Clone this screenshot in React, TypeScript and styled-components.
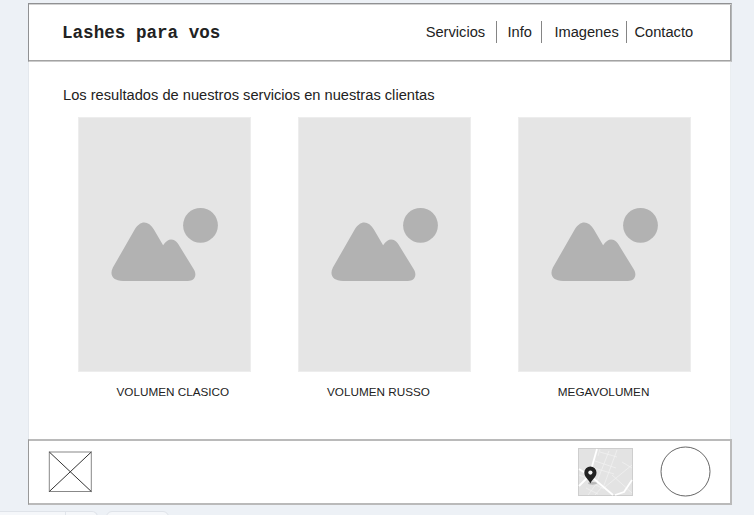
import React from "react";
import styled, { createGlobalStyle } from "styled-components";

const GlobalStyle = createGlobalStyle`
  *, *::before, *::after { box-sizing: border-box; }
  body { margin: 0; background: #edf1f6; overflow: hidden; }
`;

const Canvas = styled.div`
  display: flex;
  flex-direction: column;
  width: 754px;
  height: 515px;
  padding-top: 3px;
  overflow: hidden;
  background: #edf1f6;
  color: #222;
  font-family: "Liberation Sans", Arial, sans-serif;
`;

const Page = styled.div`
  display: flex;
  flex-direction: column;
  width: 704px;
  margin-left: 28px;
`;

const Header = styled.header`
  display: flex;
  align-items: flex-start;
  height: 59px;
  padding: 0 0 0 33px;
  background: #fff;
  border: 1px solid #909193;
  border-right-color: #b3b6b8;
  border-bottom-color: #cbcbcb;
  box-shadow: inset 0 1px #d2d2d2, inset -1px -1px #a3a3a3;
`;

const Brand = styled.div`
  width: 363.4px;
  padding-top: 19px;
  font: bold 17.6px/20px "Courier New", "Liberation Mono", monospace;
  white-space: nowrap;
`;

const Nav = styled.nav`
  display: flex;
  padding-top: 17px;
`;

const NavItem = styled.a<{ $width: number; $inset: number; $last?: boolean }>`
  width: ${(p) => p.$width}px;
  height: 22px;
  padding-left: ${(p) => p.$inset}px;
  border-right: ${(p) => (p.$last ? "0" : "1px solid #858585")};
  font-size: 14.67px;
  line-height: 23px;
  white-space: nowrap;
`;

const Main = styled.main`
  height: 377px;
  margin: 0 1px 0 0;
  padding: 24px 0 0 34px;
  background: #fff;
  border-left: 1px solid #e4e8ed;
  border-right: 1px solid #eaeef1;
`;

const Title = styled.h1`
  margin: 0 0 13px;
  font-size: 14.67px;
  font-weight: 400;
  line-height: 18px;
  white-space: nowrap;
`;

const Gallery = styled.div`
  display: grid;
  grid-template-columns: repeat(3, 173px);
  column-gap: 47px;
  margin-left: 15px;
`;

const Card = styled.figure`
  margin: 0;
`;

const Placeholder = styled.div`
  height: 255px;
  padding: 89px 0 0 31px;
  background: #e5e5e5;
  border: 1px solid #ededed;
`;

const Caption = styled.figcaption<{ $inset: number }>`
  padding: 12px 0 0 ${(p) => p.$inset}px;
  font-size: 11.73px;
  line-height: 16px;
  white-space: nowrap;
`;

const Footer = styled.footer`
  display: flex;
  height: 66px;
  padding-left: 19px;
  background: #fff;
  border: 1px solid #bababa;
  border-left-color: #999;
  box-shadow: inset 0 1px #bababa, inset -1px -1px #bababa;
`;

const CrossIcon = styled.svg`
  margin-top: 11px;
`;

const MapIcon = styled.svg`
  margin: 8px 0 0 486px;
`;

const RingIcon = styled.svg`
  margin: 6px 0 0 27px;
`;

const Tabs = styled.div`
  display: flex;
  gap: 8px;
  margin-top: 6px;
`;

const Tab = styled.div<{ $width: number; $first?: boolean }>`
  width: ${(p) => p.$width}px;
  height: 10px;
  background: #f5f7fa;
  border: 1px solid #dfe3e9;
  border-left-width: ${(p) => (p.$first ? 0 : 1)}px;
  border-radius: ${(p) => (p.$first ? "0 6px 0 0" : "6px 6px 0 0")};
`;

const TabDivider = styled.div`
  width: 1px;
  height: 9px;
  margin-left: 65px;
  background: #e1e5eb;
`;

const Landscape = () => (
  <svg width="108" height="75" viewBox="-0.4 0 108 75" fill="#b2b2b2">
    <circle cx="90.1" cy="18.3" r="17.4" />
    <path d="M2.5 60.5 L24 23 C29.5 13 38 13 43.5 22.5 L52.7 38.2 C57.5 30.5 63.5 31 67.5 36.5 L83.5 62.5 C87 68.5 84 73.9 77.5 73.9 L12.5 73.9 C2.5 73.9 -1.3 67.5 2.5 60.5 Z" />
  </svg>
);

const CityMap = () => (
  <MapIcon width="55" height="49" viewBox="0 0 55 49" fill="none">
    <rect x=".5" y=".5" width="54" height="47" fill="#e3e3e3" stroke="#cecece" />
    <g stroke="#f2f2f2" strokeWidth=".7">
      <path d="M17 13l21 7M16 20l20 6M22 1l-2 7M39 2L25 40M31 3L18 36M22 4l17 5M12 34l14 7M8 40l12 6M19 35L10 47M24 39l-7 8M1 27l8 3M27 39L54 17M34 27l20 18M44 14l10 6" />
    </g>
    <path d="M19 1L13 22M1 21l14 9 20 17M1 38l8-8M37 47l9-3 8-12" stroke="#fff" strokeWidth="1.8" />
    <ellipse cx="14.5" cy="35.3" rx="4.5" ry="1.4" fill="#b9b9b9" />
    <path d="M12.4 35.5C10.8 31.5 6.3 29.3 6.3 24.5a6.1 6.1 0 0 1 12.2 0c0 4.8-4.5 7-6.1 11Z" fill="#222" />
    <circle cx="12.4" cy="24.6" r="2.1" fill="#f4f4f4" />
  </MapIcon>
);

const cards = [
  { label: "VOLUMEN CLASICO", inset: 38.5 },
  { label: "VOLUMEN RUSSO", inset: 29 },
  { label: "MEGAVOLUMEN", inset: 39.8 },
];

export default function App() {
  return (
    <>
      <GlobalStyle />
      <Canvas>
        <Page>
          <Header>
            <Brand>Lashes para vos</Brand>
            <Nav>
              <NavItem $width={71.6} $inset={0.3}>Servicios</NavItem>
              <NavItem $width={45} $inset={10.5}>Info</NavItem>
              <NavItem $width={85} $inset={12.4}>Imagenes</NavItem>
              <NavItem $width={70} $inset={7.5} $last>Contacto</NavItem>
            </Nav>
          </Header>
          <Main>
            <Title>Los resultados de nuestros servicios en nuestras clientas</Title>
            <Gallery>
              {cards.map((card) => (
                <Card key={card.label}>
                  <Placeholder><Landscape /></Placeholder>
                  <Caption $inset={card.inset}>{card.label}</Caption>
                </Card>
              ))}
            </Gallery>
          </Main>
          <Footer>
            <CrossIcon width="44" height="42" viewBox="0 0 44 42" fill="none">
              <rect x="1.3" y="1" width="42" height="39.5" stroke="#888" />
              <path d="M1.3 1l42 39.5M43.3 1l-42 39.5" stroke="#333" />
            </CrossIcon>
            <CityMap />
            <RingIcon width="52" height="52" viewBox="0 0 52 52" fill="none">
              <circle cx="25.5" cy="25.5" r="24.5" stroke="#555" strokeWidth=".9" />
            </RingIcon>
          </Footer>
        </Page>
        <Tabs>
          <Tab $width={98} $first><TabDivider /></Tab>
          <Tab $width={63} />
        </Tabs>
      </Canvas>
    </>
  );
}
